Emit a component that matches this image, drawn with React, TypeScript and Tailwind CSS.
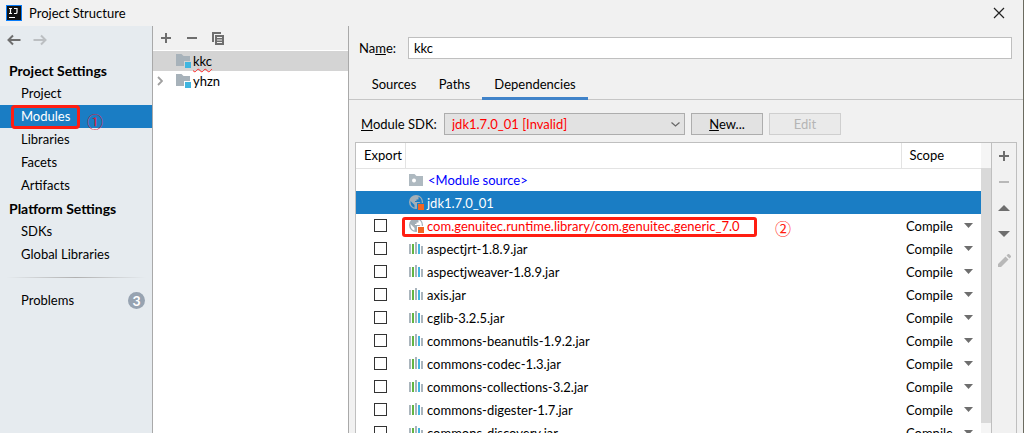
import React from "react";

const settings = [
  { title: "Project Settings", items: ["Project", "Modules", "Libraries", "Facets", "Artifacts"] },
  { title: "Platform Settings", items: ["SDKs", "Global Libraries"] },
];

const libraries = [
  "aspectjrt-1.8.9.jar",
  "aspectjweaver-1.8.9.jar",
  "axis.jar",
  "cglib-3.2.5.jar",
  "commons-beanutils-1.9.2.jar",
  "commons-codec-1.3.jar",
  "commons-collections-3.2.jar",
  "commons-digester-1.7.jar",
  "commons-discovery.jar",
];

function Logo() {
  return (
    <svg width="16" height="16" viewBox="0 0 16 16">
      <rect width="16" height="16" fill="#087cfa" />
      <rect x="1" y="1" width="14" height="14" fill="#111" />
      <path d="M3 3.5h3M4.5 3.5v5M3 8.5h3M8 3.5h3v3.7q0 1.3-1.3 1.3H8" fill="none" stroke="#fff" strokeWidth="1.2" />
      <path d="M3 12.5h6" stroke="#fff" />
    </svg>
  );
}

function Arrow({ className }: { className: string }) {
  return (
    <svg width="14" height="12" viewBox="0 0 14 12" fill="none" stroke="currentColor" strokeWidth="2" className={className}>
      <path d="M13.5 6H1.5M6 1.5L1.5 6L6 10.5" />
    </svg>
  );
}

function Plus() {
  return (
    <svg width="12" height="12" viewBox="0 0 12 12">
      <path d="M5 1h2v4h4v2H7v4H5V7H1V5h4z" fill="#6e6e6e" />
    </svg>
  );
}

function Minus({ className }: { className: string }) {
  return (
    <svg width="12" height="12" viewBox="0 0 12 12" className={className}>
      <path d="M1 5h10v2H1z" fill="currentColor" />
    </svg>
  );
}

function Copy() {
  return (
    <svg width="12" height="13" viewBox="0 0 12 13">
      <path d="M0 0h9v2H2v8H0z" fill="#6e6e6e" />
      <path d="M3 3h9v10H3z" fill="#6e6e6e" />
      <path d="M5 5.5h5M5 8h5M5 10.5h5" stroke="#f1f1f1" />
    </svg>
  );
}

function ModuleIcon() {
  return (
    <svg width="16" height="14" viewBox="0 0 16 14" className="shrink-0">
      <path d="M0 0h5.5l2 2H14v5H8v5H0z" fill="#a7b2ba" />
      <path d="M9 8h6v6H9z" fill="#40b6e0" />
    </svg>
  );
}

function SourceIcon() {
  return (
    <svg width="14" height="12" viewBox="0 0 14 12" className="shrink-0">
      <path d="M0 0h5.5l2 2H14v10H0z" fill="#aeb9c0" />
      <circle cx="5" cy="6.5" r="2" fill="#fff" />
    </svg>
  );
}

function SdkIcon({ hole }: { hole: string }) {
  return (
    <svg width="15" height="15" viewBox="0 0 15 15" className="shrink-0">
      <circle cx="7" cy="7" r="7" fill="#a3afb7" />
      <path d="M1.500 6L5.500 10V12.700Q1.200 11.200 1.500 6z" fill={hole} />
      <path d="M9.500 1.800Q13 3.200 12.800 8H11.500L10.500 7H6V6H7.500V4.500H9.500z" fill={hole} />
      <path d="M8 8h7v7H8z" fill={hole} />
      <path d="M9 9h6v6H9z" fill="#f26522" />
    </svg>
  );
}

function LibraryIcon() {
  return (
    <svg width="14" height="13" viewBox="0 0 14 13" className="shrink-0">
      <path d="M0 2h2v10H0zM6 0h2v12H6zM12 4h2v8h-2z" fill="#aab5bd" />
      <path d="M3 2h2v10H3z" fill="#62b543" />
      <path d="M9 2h2v10H9z" fill="#40b6e0" />
    </svg>
  );
}

function Triangle({ up }: { up?: boolean }) {
  return (
    <svg width="12" height="6" viewBox="0 0 12 6">
      <path d={up ? "M0 6L6 0L12 6z" : "M0 0h12L6 6z"} fill="#6e6e6e" />
    </svg>
  );
}

function Pencil() {
  return (
    <svg width="13" height="13" viewBox="0 0 13 13" fill="#b8b8b8">
      <path d="M0 13v-3L7.5 2.5l3 3L3 13zM8.5 1.5L10 0h1l2 2v1l-1.5 1.5z" />
    </svg>
  );
}

function LibraryRow({ name, invalid }: { name: string; invalid?: boolean }) {
  return (
    <tr className="h-[23px]">
      <td className="text-center">
        <input
          type="checkbox"
          aria-label={`Export ${name}`}
          className="mx-auto block size-[13px] appearance-none border border-[#333] bg-white"
        />
      </td>
      <td className="relative">
        <div className="flex items-center gap-1 pl-1">
          {invalid ? <SdkIcon hole="#ffffff" /> : <LibraryIcon />}
          <span className={invalid ? "-ml-px text-[#ff0000]" : ""}>{name}</span>
        </div>
        {invalid && (
          <>
            <div className="absolute -left-[3px] top-[3px] h-5 w-[355px] rounded-[3px] border-[3px] border-[#ff1e12]" />
            <span className="absolute left-[370px] top-1 font-['Noto_Sans_CJK_SC',sans-serif] text-base leading-5 text-[#ff1e12]">②</span>
          </>
        )}
      </td>
      <td className="relative">
        <select
          aria-label={`Scope of ${name}`}
          className="block h-5 w-full appearance-none bg-transparent pl-[5px] leading-5"
          defaultValue="Compile"
        >
          <option>Compile</option>
          <option>Test</option>
          <option>Runtime</option>
          <option>Provided</option>
        </select>
        <svg width="9" height="5" viewBox="0 0 9 5" className="pointer-events-none absolute right-2 top-[9px]">
          <path d="M0 0h9L4.500 5z" fill="#6e6e6e" />
        </svg>
      </td>
    </tr>
  );
}

function Sidebar() {
  return (
    <nav className="w-[153px] shrink-0 border-r border-[#a9a9a9] bg-[#e6ebef]">
      <div className="flex h-[33px] items-start gap-3 pl-[7px] pt-2">
        <button aria-label="Back"><Arrow className="text-[#6e6e6e]" /></button>
        <button aria-label="Forward" disabled><Arrow className="rotate-180 text-[#bcbfc2]" /></button>
      </div>
      {settings.map((group) => (
        <div key={group.title}>
          <h2 className="pl-[9px] text-sm font-bold leading-[23px]">{group.title}</h2>
          <ul>
            {group.items.map((item) => (
              <li key={item} className={item === "Modules" ? "relative bg-[#1a7dc4] text-white" : ""}>
                <a href="#" className="block pl-[21px] leading-[23px]">{item}</a>
                {item === "Modules" && (
                  <>
                    <div className="absolute left-[11px] top-0 h-6 w-[69px] rounded-[4px] border-[3px] border-[#ff1e12]" />
                    <span className="absolute left-[87px] top-[6px] font-['Noto_Sans_CJK_SC',sans-serif] text-base leading-5 text-[#d8203c]">①</span>
                  </>
                )}
              </li>
            ))}
          </ul>
        </div>
      ))}
      <div className="mx-[6px] mb-[11px] mt-[11px] h-px bg-linear-to-r from-transparent via-[#b0b0b0] to-transparent" />
      <div className="flex items-center justify-between pl-[21px] pr-[7px] leading-[23px]">
        <a href="#">Problems</a>
        <span className="size-[17px] rounded-full bg-[#97a3b1] text-center text-sm font-bold leading-[17px] text-white">3</span>
      </div>
    </nav>
  );
}

function ModuleTree() {
  return (
    <section className="w-[196px] shrink-0 border-r border-[#a9a9a9] bg-white">
      <div className="mb-px flex h-6 items-center gap-[14px] bg-[#f1f1f1] pl-[7px]">
        <button aria-label="Add"><Plus /></button>
        <button aria-label="Remove"><Minus className="text-[#6e6e6e]" /></button>
        <button aria-label="Copy"><Copy /></button>
      </div>
      <ul className="leading-5">
        <li className="flex h-5 items-center gap-px bg-[#d4d4d4] pl-[23px]">
          <ModuleIcon />
          <span className="underline decoration-[#ff2020] decoration-wavy decoration-1 underline-offset-2">kkc</span>
        </li>
        <li className="flex h-5 items-center gap-px pl-1">
          <svg width="6" height="10" viewBox="0 0 6 10" fill="none" stroke="#a0a0a0" strokeWidth="1.8" className="mr-3">
            <path d="M1 1l4 4l-4 4" />
          </svg>
          <ModuleIcon />
          <span>yhzn</span>
        </li>
      </ul>
    </section>
  );
}

function Dependencies() {
  return (
    <div className="ml-[6px] mr-[6px] mt-[7px] flex min-h-0 flex-1 border-x border-t border-[#bfbfbf] bg-white">
      <div className="min-w-0 flex-1 overflow-hidden">
        <table className="w-full table-fixed border-collapse">
          <colgroup>
            <col className="w-[49px]" />
            <col />
            <col className="w-[80px]" />
          </colgroup>
          <thead>
            <tr className="h-[25px] border-b border-[#e3e3e3] text-left">
              <th className="border-r border-[#e3e3e3] pl-2 font-normal">Export</th>
              <th className="border-r border-[#e3e3e3]"></th>
              <th className="pl-2 font-normal">Scope</th>
            </tr>
          </thead>
          <tbody>
            <tr className="h-[23px]">
              <td></td>
              <td>
                <div className="flex items-center gap-[5px] pl-1 text-[#0000ff]">
                  <SourceIcon />
                  <span>&lt;Module source&gt;</span>
                </div>
              </td>
              <td></td>
            </tr>
            <tr className="h-[23px] bg-[#1a7dc4] text-white">
              <td></td>
              <td>
                <div className="flex items-center gap-[3px] pl-1">
                  <SdkIcon hole="#1a7dc4" />
                  <span>jdk1.7.0_01</span>
                </div>
              </td>
              <td></td>
            </tr>
            <LibraryRow name="com.genuitec.runtime.library/com.genuitec.generic_7.0" invalid />
            {libraries.map((name) => (
              <LibraryRow key={name} name={name} />
            ))}
          </tbody>
        </table>
      </div>
      <div className="w-[10px] shrink-0 bg-[#f5f5f5] pb-[10px] pt-[25px]">
        <div className="h-full bg-[#d9d9d9]" />
      </div>
      <div className="flex w-[25px] shrink-0 flex-col items-center border-l border-[#bfbfbf] bg-[#f1f1f1]">
        <button aria-label="Add dependency" className="flex h-[26px] items-center"><Plus /></button>
        <button aria-label="Remove dependency" disabled className="flex h-[26px] items-center"><Minus className="text-[#b8b8b8]" /></button>
        <button aria-label="Move up" className="flex h-[26px] items-center"><Triangle up /></button>
        <button aria-label="Move down" className="flex h-[26px] items-center"><Triangle /></button>
        <button aria-label="Edit dependency" disabled className="flex h-[26px] items-center"><Pencil /></button>
      </div>
    </div>
  );
}

export default function App() {
  return (
    <div className="flex h-screen flex-col overflow-hidden border-r border-[#6b6b60] bg-[#f1f1f1] font-['Lato','Noto_Sans_CJK_SC',sans-serif] text-[13px] leading-5 text-black">
      <header className="flex h-[26px] shrink-0 items-center gap-[7px] pl-[6px] pr-[18px]">
        <Logo />
        <h1 className="flex-1">Project Structure</h1>
        <button aria-label="Close">
          <svg width="12" height="12" viewBox="0 0 12 12" stroke="#222" strokeWidth="1.2">
            <path d="M1 1l10 10M11 1L1 11" />
          </svg>
        </button>
      </header>
      <div className="flex min-h-0 flex-1">
        <Sidebar />
        <ModuleTree />
        <main className="flex min-w-0 flex-1 flex-col">
          <div className="flex items-center pl-[10px] pr-[11px] pt-[11px]">
            <label htmlFor="name" className="w-[49px]">Na<u>m</u>e:</label>
            <input id="name" defaultValue="kkc" className="h-[22px] min-w-0 flex-1 border border-[#bfbfbf] bg-white px-[5px]" />
          </div>
          <div role="tablist" className="mt-[13px] flex h-7 border-b border-[#c6c6c6] pl-3">
            <button role="tab" className="w-[66px] pb-1">Sources</button>
            <button role="tab" className="w-[55px] pb-1">Paths</button>
            <button role="tab" aria-selected="true" className="-mb-px w-[106px] border-b-3 border-[#4083c9] pb-[2px]">Dependencies</button>
          </div>
          <div className="mt-[13px] flex items-center gap-[6px] pl-3">
            <label htmlFor="sdk" className="-mr-[6px] w-[83px] whitespace-nowrap"><u>M</u>odule SDK:</label>
            <div className="relative w-[241px]">
              <select id="sdk" className="block h-[22px] w-full appearance-none border border-[#adadad] bg-[#e2e2e2] pl-[7px] text-[#ff0000]">
                <option>jdk1.7.0_01 [Invalid]</option>
              </select>
              <svg width="9" height="5" viewBox="0 0 9 5" fill="none" stroke="#666" strokeWidth="1.2" className="pointer-events-none absolute right-[5px] top-[9px]">
                <path d="M.5 .5l4 3.500l4-3.500" />
              </svg>
            </div>
            <button className="h-[22px] w-[72px] border border-[#adadad] bg-[#e2e2e2]"><u>N</u>ew...</button>
            <button disabled className="h-[22px] w-[72px] border border-[#cfcfcf] bg-[#eaeaea] text-[#b5b5b5]">Edit</button>
          </div>
          <Dependencies />
        </main>
      </div>
    </div>
  );
}
